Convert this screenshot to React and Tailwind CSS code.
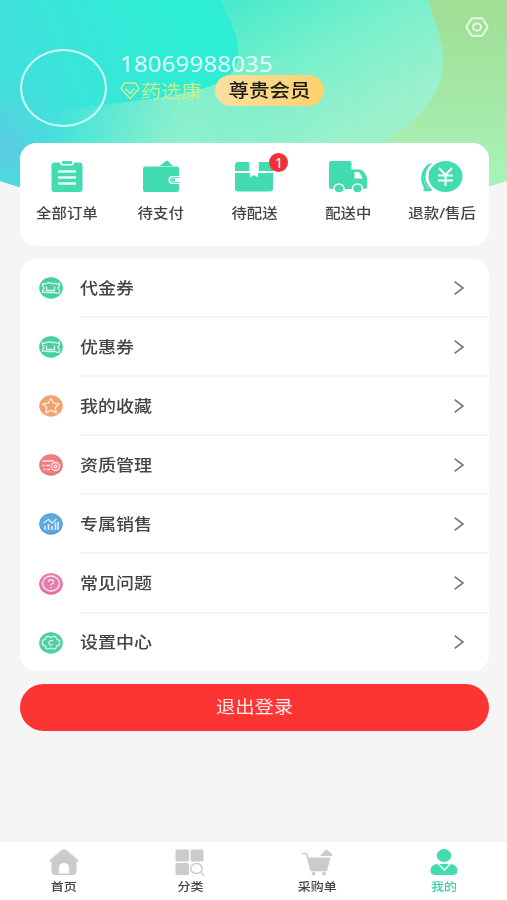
import React from "react";

const orders = [
  { label: "全部订单", icon: <ClipboardIcon /> },
  { label: "待支付", icon: <WalletIcon /> },
  { label: "待配送", icon: <BoxIcon />, badge: 1 },
  { label: "配送中", icon: <TruckIcon /> },
  { label: "退款/售后", icon: <RefundIcon /> },
];

const menu = [
  { label: "代金券", icon: <TicketIcon /> },
  { label: "优惠券", icon: <TicketIcon /> },
  { label: "我的收藏", icon: <StarIcon /> },
  { label: "资质管理", icon: <LicenseIcon /> },
  { label: "专属销售", icon: <SalesIcon /> },
  { label: "常见问题", icon: <QuestionIcon /> },
  { label: "设置中心", icon: <SettingIcon /> },
];

const tabs = [
  { label: "首页", icon: <HomeIcon /> },
  { label: "分类", icon: <CategoryIcon /> },
  { label: "采购单", icon: <CartIcon /> },
  { label: "我的", icon: <UserIcon />, active: true },
];

export default function App() {
  return (
    <div className="relative isolate flex h-[900px] w-[507px] flex-col overflow-hidden bg-[#f5f5f5] font-['Noto_Sans','Noto_Sans_CJK_SC',sans-serif]">
      <HeaderBackground />
      <header className="flex h-[143px] items-start justify-between pr-[18px] pl-5">
        <div className="flex pt-[49px]">
          <div className="h-[78px] w-[87px] rounded-[50%] border-[2.5px] border-[#d5fbf8]" />
          <div className="flex flex-col pl-[13px]">
            <span className="mt-[2px] h-[26px] scale-y-90 text-[24.3px] leading-[26px] text-[#e3fffb]">18069988035</span>
            <div className="-mt-[2px] flex items-center">
              <DiamondIcon />
              <span className="ml-px w-[74px] scale-y-90 text-[20.3px] leading-[28px] whitespace-nowrap text-[#c8ef90]">药选康</span>
              <span className="flex h-[31px] w-[109px] items-center justify-center rounded-full bg-linear-to-r from-[#f9dfa0] to-[#fdd16c] text-[20.5px] leading-none font-medium whitespace-nowrap text-[#1d1b14]">
                <span className="scale-y-90">尊贵会员</span>
              </span>
            </div>
          </div>
        </div>
        <NutIcon />
      </header>

      <main className="flex flex-1 flex-col gap-[13px] pr-[18px] pl-5">
        <section className="grid h-[103px] grid-cols-5 rounded-2xl bg-white pt-[16px]">
          {orders.map((item) => (
            <div key={item.label} className="flex flex-col items-center">
              <div className="relative h-9">
                {item.icon}
                {item.badge && (
                  <span className="absolute -top-[6px] -right-[14px] flex h-[19px] w-[19px] items-center justify-center rounded-full bg-[#f03236] text-[14px] leading-none text-white">
                    {item.badge}
                  </span>
                )}
              </div>
              <span className="mt-[8px] scale-y-90 text-[15.4px] leading-5 font-medium whitespace-nowrap text-[#444]">{item.label}</span>
            </div>
          ))}
        </section>

        <section className="flex h-[412px] flex-col rounded-2xl bg-white">
          {menu.map((item, i) => (
            <div key={item.label} className="flex h-[59.1px] shrink-0 items-center pl-[19px]">
              {item.icon}
              <div className={`ml-[17px] flex flex-1 items-center justify-between self-stretch border-b-2 pr-[25px] ${i < menu.length - 1 ? "border-[#f5f5f5]" : "border-transparent"}`}>
                <span className="scale-y-90 text-[18px] leading-6 font-medium text-[#444]">{item.label}</span>
                <svg width="10" height="14" viewBox="0 0 10 14" fill="none" stroke="#777" strokeWidth="1.600"><path d="M.6.7 9 7 .6 13.3" /></svg>
              </div>
            </div>
          ))}
        </section>

        <button className="h-[47px] rounded-full bg-[#fc3434] text-[19.3px] text-[#ffeaea]">
          <span className="block scale-y-90">退出登录</span>
        </button>
      </main>

      <nav className="grid h-[58px] grid-cols-4 bg-white pt-[6px]">
        {tabs.map((tab) => (
          <div key={tab.label} className="flex flex-col items-center">
            {tab.icon}
            <span className={`mt-[3px] ml-px scale-y-90 text-[13px] leading-4 font-medium ${tab.active ? "text-[#42cfa3]" : "text-[#444]"}`}>{tab.label}</span>
          </div>
        ))}
      </nav>
    </div>
  );
}

function HeaderBackground() {
  return (
    <svg className="absolute top-0 left-0 -z-10" width="507" height="230" viewBox="0 0 507 230">
      <defs>
        <linearGradient id="base" x1="0" y1="0" x2="0" y2="1">
          <stop offset="0" stopColor="#9fde93" />
          <stop offset=".75" stopColor="#a9f1b6" />
        </linearGradient>
        <linearGradient id="mint" gradientUnits="userSpaceOnUse" x1="225" y1="10" x2="310" y2="160">
          <stop offset="0" stopColor="#4aebca" />
          <stop offset=".5" stopColor="#7af0cc" />
          <stop offset="1" stopColor="#9cf1cc" />
        </linearGradient>
        <linearGradient id="low" gradientUnits="userSpaceOnUse" x1="60" y1="105" x2="175" y2="150">
          <stop offset="0" stopColor="#40e3dc" />
          <stop offset=".45" stopColor="#62e9d4" />
          <stop offset="1" stopColor="#92f0cb" />
        </linearGradient>
        <linearGradient id="lowFade" gradientUnits="userSpaceOnUse" x1="150" y1="0" x2="300" y2="0">
          <stop offset="0" stopColor="#fff" />
          <stop offset="1" stopColor="#fff" stopOpacity="0" />
        </linearGradient>
        <mask id="lowMask" maskUnits="userSpaceOnUse" x="0" y="0" width="507" height="230">
          <path d="M0 0H507V230H0Z" fill="url(#lowFade)" />
        </mask>
        <linearGradient id="cyan" gradientUnits="userSpaceOnUse" x1="0" y1="90" x2="170" y2="20">
          <stop offset="0" stopColor="#42dfdc" />
          <stop offset="1" stopColor="#2eedd5" />
        </linearGradient>
        <radialGradient id="blue" gradientUnits="userSpaceOnUse" cx="5" cy="148" r="70">
          <stop offset="0" stopColor="#5cc9e2" />
          <stop offset="1" stopColor="#50d7df" stopOpacity="0" />
        </radialGradient>
        <clipPath id="curve">
          <path d="M0 0H507V181Q380 222 253 222Q126 222 0 181Z" />
        </clipPath>
      </defs>
      <g clipPath="url(#curve)">
        <path d="M0 0H507V230H0Z" fill="url(#base)" />
        <path d="M0 0H428C434 19 443 38 443 61C443 94 420 121 380 143L300 190H0Z" fill="url(#mint)" />
        <path d="M0 60H300V230H0Z" fill="url(#low)" mask="url(#lowMask)" />
        <path d="M0 0H220C232 21 239 40 238 56C237 75 222 84 198 90C165 99 130 101 95 106Q50 112 0 120Z" fill="url(#cyan)" />
        <path d="M0 60H90V230H0Z" fill="url(#blue)" />
      </g>
    </svg>
  );
}

function NutIcon() {
  return (
    <svg className="mt-[17px]" width="24" height="20" viewBox="0 0 24 20" fill="none" stroke="#e6fbe2" strokeWidth="2">
      <path d="M7.8 1.2h8.4q1 0 1.5.8l4.5 7q.5 1 0 2l-4.5 7q-.5.8-1.5.8H7.8q-1 0-1.5-.8l-4.5-7q-.5-1 0-2l4.5-7q.5-.8 1.5-.8Z" />
      <ellipse cx="12" cy="10" rx="4" ry="3.6" />
    </svg>
  );
}

function DiamondIcon() {
  return (
    <svg width="20" height="18" viewBox="0 0 20 18" fill="none" stroke="#c8ef90" strokeWidth="1.5" strokeLinejoin="round">
      <path d="M4.600 1h10.800L19 6.400 10 16.500 1 6.400Z" />
      <path d="M5.500 6.600 10 11.500l4.500-4.900" />
    </svg>
  );
}

function ClipboardIcon() {
  return (
    <svg width="32" height="36" viewBox="0 0 32 36">
      <rect x=".5" y="3.500" width="31" height="29.500" rx="3" fill="#42dcb0" />
      <path d="M9 0h14v3.500q0 3-3 3h-8q-3 0-3-3Z" fill="#fff" />
      <rect x="11" y="2" width="10" height="3" rx="1" fill="#42dcb0" />
      <path d="M8 12.500h16M8 18.500h16M8 24.500h16" stroke="#e8fff6" strokeWidth="2.400" strokeLinecap="round" />
    </svg>
  );
}

function WalletIcon() {
  return (
    <svg width="38" height="36" viewBox="0 0 38 36">
      <path d="M17.500 7 24 2q1-.8 2 0l5 5Z" fill="#42dcb0" />
      <rect x="1" y="7.500" width="36" height="25.500" rx="2" fill="#42dcb0" />
      <path d="M38 17h-7.500q-4 0-4 4t4 4H38Z" fill="#fff" />
      <path d="M38 18.300h-7q-3 0-3 2.700t3 2.700h7Z" fill="#42dcb0" />
      <path d="M38 19h-6.500q-2.500 0-2.500 2t2.500 2H38Z" fill="#fff" />
      <circle cx="31.500" cy="21" r="1.800" fill="#42dcb0" />
    </svg>
  );
}

function BoxIcon() {
  return (
    <svg width="40" height="36" viewBox="0 0 40 36" fill="#42dcb0">
      <path d="M1 12V6q0-3 3-3h11.500v9ZM24.500 3H36q3 0 3 3v6H24.500Z" />
      <path d="M1 14h38v15.500q0 3-3 3H4q-3 0-3-3Z" />
      <path d="M15.500 3h9v9H24v6.500L20 16l-4 2.500V12h-.5Z" fill="#fff" />
    </svg>
  );
}

function TruckIcon() {
  return (
    <svg width="40" height="36" viewBox="0 0 40 36">
      <path d="M1 4q0-2 2-2h18.500q2 0 2 2v6.500H32q2 0 3.500 2L39 18v10q0 2-2 2H3q-2 0-2-2Z" fill="#42dcb0" />
      <path d="M26.500 13H31l4 6.500h-8.500Z" fill="#fff" />
      <g fill="#42dcb0" stroke="#fff" strokeWidth="1.500">
        <ellipse cx="11" cy="29.500" rx="5" ry="4.500" />
        <ellipse cx="29.500" cy="29.500" rx="5" ry="4.500" />
      </g>
    </svg>
  );
}

function RefundIcon() {
  return (
    <svg width="42" height="36" viewBox="0 0 42 36">
      <path d="M9 5.500C-.5 12-.5 23 6 31H2.500M6 31h4" fill="none" stroke="#42dcb0" strokeWidth="2.500" />
      <path d="M7 5.500C1 13 1 23 8 31h3V4Z" fill="#42dcb0" />
      <ellipse cx="22.500" cy="17.500" rx="18" ry="17" fill="#fff" />
      <ellipse cx="24.500" cy="17.500" rx="17" ry="15.500" fill="#42dcb0" />
      <path d="m18 9 6.500 7L31 9M17 16.500h15M17 21.500h15M24.500 16v11" fill="none" stroke="#f2fffb" strokeWidth="2.200" />
    </svg>
  );
}

// Coloured round base shared by the menu icons
function RoundIcon({ color, edge, children }) {
  return (
    <svg className="-mt-px" width="24" height="22" viewBox="0 0 24 22" fill="none" stroke="#fff" strokeOpacity=".8" strokeWidth="1.300" strokeLinejoin="round">
      <ellipse cx="12" cy="11" rx="11.800" ry="10.700" fill={edge} stroke="none" />
      <ellipse cx="12" cy="10.200" rx="11.200" ry="9.600" fill={color} stroke="none" />
      {children}
    </svg>
  );
}

function TicketIcon() {
  return (
    <RoundIcon color="#4bcfa2" edge="#36d6a2">
      <path d="M3.500 6.500Q5 8 7.500 6.500t5 0h4q2 1.300 4-.5v3q-3 2 0 4v3q-2 .8-4-.5h-9q-2-1.300-4 0v-2.500q3-2 0-4Z" />
      <path d="M7.500 9.500v4h8v-4" />
    </RoundIcon>
  );
}

function StarIcon() {
  return (
    <RoundIcon color="#f1a36f" edge="#f5a873">
      <path d="m12 3.500 2.600 4.600 5.600.8-4 3.600 1 5.200-5.200-2.400-5.200 2.400 1-5.200-4-3.600 5.600-.8Z" />
    </RoundIcon>
  );
}

function LicenseIcon() {
  return (
    <RoundIcon color="#ed7e82" edge="#ec7078">
      <path d="M3.500 7H15M3.500 11.500h2m1.500 0h4M4.500 15.500h2m1.500 0h3" strokeWidth="1.400" />
      <circle cx="16.500" cy="12.500" r="4" />
      <circle cx="16.500" cy="12.500" r="1.300" />
    </RoundIcon>
  );
}

function SalesIcon() {
  return (
    <RoundIcon color="#60a9df" edge="#5599db">
      <path d="M6 17v-4M9.500 17v-6M13 17v-4M16.500 17V9.500M19 17V9" strokeWidth="1.600" />
      <path d="m4.500 10 5-3.500 3.500 3.500 4.500-4" />
    </RoundIcon>
  );
}

function QuestionIcon() {
  return (
    <RoundIcon color="#e77caf" edge="#df68a2">
      <ellipse cx="12" cy="10.500" rx="8.500" ry="7.500" />
      <path d="M9.500 9q0-2.300 2.500-2.300T14.500 9q0 1.300-1.300 1.800T12 12.500M12 14v1.300" />
    </RoundIcon>
  );
}

function SettingIcon() {
  return (
    <RoundIcon color="#50cfa4" edge="#43d5a6">
      <path d="M7.500 4.500h2.500q2 1.500 4 0h2.500l1.500 3 2.500.8v4.500l-2.500 1-1.500 3H14q-2-1.500-4 0H7.500l-1.500-3-2.500-1V8.300L6 7.500Z" />
      <path d="M14 9q-3.500-1.500-4 1.700t4 1.800" />
    </RoundIcon>
  );
}

function HomeIcon() {
  return (
    <svg className="ml-px" width="32" height="28" viewBox="0 0 32 28" fill="#cbcbcb">
      <path d="M14 2q2-1.500 4 0l12.500 10q.8 1.500-1 1.500H28.500V23q0 4-4 4h-17q-4 0-4-4v-9.500H2.500q-1.800 0-1-1.500Z" />
      <path d="M11 25.500V20q0-5 5-5t5 5v5.500Z" fill="#fff" />
    </svg>
  );
}

function CategoryIcon() {
  return (
    <svg width="30" height="28" viewBox="0 0 30 28" fill="#cbcbcb">
      <rect x=".5" y="1.500" width="13.500" height="12" rx="1.500" />
      <rect x="15.500" y="1.500" width="13" height="12" rx="1.500" />
      <rect x=".5" y="15" width="13.500" height="12" rx="1.500" />
      <g fill="none" stroke="#cbcbcb" strokeWidth="1.400">
        <ellipse cx="21.500" cy="20.500" rx="5.700" ry="5" />
        <path d="m25.500 24 4 3.500" />
      </g>
    </svg>
  );
}

function CartIcon() {
  return (
    <svg width="32" height="28" viewBox="0 0 32 28" fill="#cbcbcb">
      <path d="m19 8 5-5.500q1.500-1.500 3 0l4.500 4-.5 1.500Z" />
      <path d="M2 5.500h3.500L10 22.500h14" fill="none" stroke="#cbcbcb" strokeWidth="1.500" strokeLinecap="round" />
      <path d="M7 9.500h22.500L26 23H10Z" />
      <circle cx="12.500" cy="25.500" r="1.900" />
      <circle cx="23" cy="25.500" r="1.900" />
    </svg>
  );
}

function UserIcon() {
  return (
    <svg width="28" height="28" viewBox="0 0 28 28" fill="#42dcb0">
      <ellipse cx="14" cy="7.500" rx="7.300" ry="6.500" />
      <path d="M7 16h14q6.500 1 6.500 6.500 0 4.500-5 4.500h-17q-5 0-5-4.500Q.5 17 7 16Z" />
      <path d="m8 15.500 6.500 6.500 6-6.500" fill="none" stroke="#e9fff8" strokeWidth="1.600" />
    </svg>
  );
}
